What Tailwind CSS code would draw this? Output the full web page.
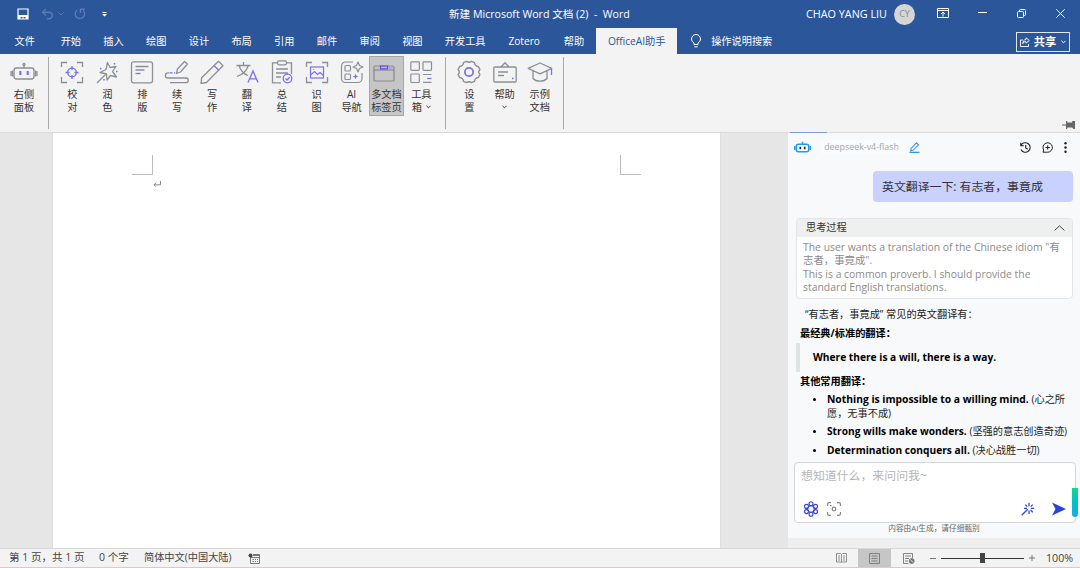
<!DOCTYPE html>
<html lang="zh-CN">
<head>
  <meta charset="UTF-8">
  <meta name="viewport" content="width=device-width, initial-scale=1.0">
  <title>新建 Microsoft Word 文档 (2) - Word</title>
  <script src="https://cdn.jsdelivr.net/npm/@tailwindcss/browser@4"></script>
</head>
<body class="w-[1080px] h-[568px] overflow-hidden flex flex-col bg-[#f3f3f3] text-[#333] whitespace-nowrap font-['Open_Sans','Noto_Sans_CJK_SC',sans-serif]">
  <!-- Title bar -->
  <header class="h-7 shrink-0 bg-[#2b579a] text-white flex items-center relative text-[10.6px]">
    <svg class="ml-[17px] w-3 h-3" viewBox="0 0 12 12" fill="none" stroke="#fff" stroke-width="1.200"><path d="M1 1h10v10H1z"/><path d="M1 7h10v4H8.500V9h-2v2h-1V9h-2v2H1z" fill="#fff" stroke="none"/></svg>
    <svg class="ml-[12px] w-[13px] h-3" viewBox="0 0 13 12" fill="none" stroke="#587bb3" stroke-width="1.400"><path d="M5 1 1.500 4.200 5 7.500M1.500 4.200h6.500a3.300 3.300 0 0 1 0 6.600H6"/></svg>
    <svg class="ml-[4px] w-[6px] h-1" viewBox="0 0 6 4" fill="none" stroke="#587bb3"><path d="M.5.5 3 3 5.500.5"/></svg>
    <svg class="ml-[10px] w-3 h-3" viewBox="0 0 12 12" fill="none" stroke="#587bb3" stroke-width="1.400"><path d="M3 2.200A4.700 4.700 0 1 0 9.200 2.500M6.500 5V1.200h4.500"/></svg>
    <svg class="ml-[16px] w-[5px] h-[5px]" viewBox="0 0 5 5"><path d="M.5 0h4v1h-4zM0 2h5L2.500 4.500z" fill="#fff"/></svg>
    <div class="absolute left-[449px] top-0 h-7 leading-7 whitespace-pre">新建 Microsoft Word 文档 (2)  -  Word</div>
    <div class="ml-auto w-[81px] flex justify-end text-[10.800px]">CHAO YANG LIU</div>
    <div class="ml-[7px] w-[21px] h-[21px] rounded-full bg-[#d5d5d5] text-[#8d8d8d] text-[9px] flex items-center justify-center">CY</div>
    <svg class="ml-[22px] mb-[2px] w-3 h-[10px]" viewBox="0 0 12 10" fill="none" stroke="#fff"><path d="M.5.5h11v9H.5zM.5 2.500h11M6 8.500v-4M4 6l2-2 2 2"/></svg>
    <svg class="ml-[29px] mb-[2px] w-[9px] h-[10px]" viewBox="0 0 9 10" stroke="#fff"><path d="M0 4.500h9"/></svg>
    <svg class="ml-[30px] mb-[2px] w-[9px] h-[9px]" viewBox="0 0 9 9" fill="none" stroke="#fff"><rect x=".5" y="2.500" width="6" height="6" rx="1"/><path d="M2.500 2.200V1.500a1 1 0 0 1 1-1h4a1 1 0 0 1 1 1v4a1 1 0 0 1-1 1h-.7"/></svg>
    <svg class="ml-[30px] mr-[15px] mb-[2px] w-[9px] h-[9px]" viewBox="0 0 9 9" stroke="#fff"><path d="m.4.4 8.200 8.200M8.600.4.4 8.600"/></svg>
  </header>

  <!-- Ribbon tabs -->
  <nav class="h-[26px] shrink-0 bg-[#2b579a] text-white flex items-center text-[10.200px] text-center leading-[26px]">
    <div class="w-[49.500px]">文件</div>
    <div class="w-[42.700px]">开始</div>
    <div class="w-[42.700px]">插入</div>
    <div class="w-[42.700px]">绘图</div>
    <div class="w-[42.700px]">设计</div>
    <div class="w-[42.700px]">布局</div>
    <div class="w-[42.700px]">引用</div>
    <div class="w-[42.700px]">邮件</div>
    <div class="w-[42.700px]">审阅</div>
    <div class="w-[42.700px]">视图</div>
    <div class="w-[63px]">开发工具</div>
    <div class="w-[55px]">Zotero</div>
    <div class="w-[44.500px]">帮助</div>
    <div class="w-[81px] h-[26px] bg-[#f3f3f3] text-[#2b579a]">OfficeAI助手</div>
    <svg class="ml-[14px] w-[10px] h-[14px]" viewBox="0 0 10 14" fill="none" stroke="#fff"><path d="M3 10.500V9C1.500 8 .5 6.700.5 5a4.500 4.500 0 0 1 9 0C9.500 6.700 8.500 8 7 9v1.500zM3.300 12.800h3.400"/></svg>
    <div class="ml-[10px]">操作说明搜索</div>
    <div class="ml-auto mr-[10px] mt-px w-[54px] h-5 border border-[#dfe6f1] flex items-center justify-center font-bold text-[11.300px]">
      <svg class="w-[10px] h-[10px] mr-1" viewBox="0 0 10 10" fill="none" stroke="#fff"><path d="M3 3H.5v6.500h8V7M6 .8 9.300 3.500 6 6.200V4.600C4.300 4.600 3.300 5.200 2.800 6.700 2.800 4.200 4 2.700 6 2.500z" stroke-width=".9"/></svg>
      共享
      <svg class="w-[5px] h-[4px] ml-[5px]" viewBox="0 0 6 4" fill="none" stroke="#fff" stroke-width="1.200"><path d="M.5.5 3 3 5.500.5"/></svg>
    </div>
  </nav>

  <!-- Ribbon -->
  <section class="h-[79px] shrink-0 bg-[#f3f3f3] border-b border-[#dadada] flex items-start relative text-[10.200px] leading-[13px] text-center text-[#333]">
    <div class="ml-[6px] mt-[2px] w-[36px] h-[60px] pt-1 flex flex-col items-center">
      <svg class="w-[28px] h-6 mb-[3.500px]" viewBox="0 0 28 24" fill="none" stroke="#8c9095" stroke-width="1.300"><rect x="4" y="8" width="20" height="11" rx="2.500"/><path d="M14 8V5.500M1 11v5M27 11v5M2.500 10.500v6M25.500 10.500v6"/><circle cx="14" cy="4.500" r="1"/><path d="M10.300 11v4M17.700 11v4" stroke="#7671f5" stroke-width="2.200"/></svg>
      <span>右侧<br>面板</span>
    </div>
    <div class="ml-[6px] mt-[3px] w-px h-[72px] bg-[#a9a9a9]"></div>
    <div class="ml-[6px] mt-[2px] flex">
      <div class="w-[34.900px] h-[60px] pt-1 flex flex-col items-center">
        <svg class="w-6 h-6 mb-[3.500px]" viewBox="0 0 24 24" fill="none" stroke="#8c9095" stroke-width="1.300"><path d="M1.500 7V2.500H7M17 2.500h5.500V7M22.500 17v5.500H17M7 22.500H1.500V17"/><g stroke="#7671f5"><circle cx="12" cy="12.500" r="4.300"/><path d="M12 6v4M12 15v4M5.500 12.500h4M14.500 12.500h4"/></g></svg>
        <span>校<br>对</span>
      </div>
      <div class="w-[34.900px] h-[60px] pt-1 flex flex-col items-center">
        <svg class="w-6 h-6 mb-[3.500px]" viewBox="0 0 24 24" fill="none" stroke="#8c9095" stroke-width="1.300" stroke-linejoin="round"><path d="m12.500 2.500 2.500 5 6-1-3.500 5 4 5.500-6-1.500-3.500 4.500-.5-6-6.500-1.500 6-3zM10.500 14.500 2 23"/><path d="M5 8.500h1.500M19.500 3v1.500M21 11.500h1.500M9 19v1.500" stroke="#7671f5" stroke-width="1.500"/></svg>
        <span>润<br>色</span>
      </div>
      <div class="w-[34.900px] h-[60px] pt-1 flex flex-col items-center">
        <svg class="w-6 h-6 mb-[3.500px]" viewBox="0 0 24 24" fill="none" stroke="#8c9095" stroke-width="1.300"><rect x="1.500" y="1.800" width="21" height="21" rx="2"/><path d="M5.500 6.500h13M5.500 10h9"/><path d="M5.500 13.500h5" stroke="#7671f5"/></svg>
        <span>排<br>版</span>
      </div>
      <div class="w-[34.900px] h-[60px] pt-1 flex flex-col items-center">
        <svg class="w-[26px] h-6 mb-[3.500px]" viewBox="0 0 26 24" fill="none" stroke="#8c9095" stroke-width="1.300" stroke-linejoin="round"><path d="m20.500 1.500 3 2.500-7 8-4 1.500 1-4.500zM5.500 12.800H4a2.600 2.600 0 0 0 0 5.200h18a2.300 2.300 0 0 1 0 4.600H6"/><path d="M6 12.800h2.500M10 12.800h1.200" stroke="#7671f5"/></svg>
        <span>续<br>写</span>
      </div>
      <div class="w-[34.900px] h-[60px] pt-1 flex flex-col items-center">
        <svg class="w-6 h-6 mb-[3.500px]" viewBox="0 0 24 24" fill="none" stroke="#8c9095" stroke-width="1.300" stroke-linejoin="round"><path d="m18.500 1.200 4.500 4.500L6.500 22.500l-5.500 1 .7-5.800z"/><path d="m14.200 5.700 4.500 4.500" stroke="#7671f5"/></svg>
        <span>写<br>作</span>
      </div>
      <div class="w-[34.900px] h-[60px] pt-1 flex flex-col items-center">
        <svg class="w-6 h-6 mb-[3.500px]" viewBox="0 0 24 24" fill="none" stroke="#8c9095" stroke-width="1.300"><path d="M1.500 5.500h14M8.500 2v3.500M4 5.500C5.500 10.500 9 14 13 15.500M13.300 5.500C11.800 11 7.500 14.500 2 16.500"/><path d="m13 22.500 5-11.500 5 11.500M14.800 18.800h6.400" stroke="#7671f5"/></svg>
        <span>翻<br>译</span>
      </div>
      <div class="w-[34.900px] h-[60px] pt-1 flex flex-col items-center">
        <svg class="w-6 h-6 mb-[3.500px]" viewBox="0 0 24 24" fill="none" stroke="#8c9095" stroke-width="1.300"><path d="M7 2.800H2.500v20H11M17 2.800h4.500V14"/><rect x="7.500" y=".8" width="9" height="4" rx="1.500"/><path d="M6 9h12M6 13h12M6 17h5"/><g stroke="#7671f5"><circle cx="17.500" cy="18.500" r="4.300"/><path d="m15.500 18.500 1.500 1.500 2.700-2.700"/></g></svg>
        <span>总<br>结</span>
      </div>
      <div class="w-[34.900px] h-[60px] pt-1 flex flex-col items-center">
        <svg class="w-6 h-6 mb-[3.500px]" viewBox="0 0 24 24" fill="none" stroke="#8c9095" stroke-width="1.300"><path d="M1.500 7V2.500H7M17 2.500h5.500V7M22.500 17v5.500H17M7 22.500H1.500V17"/><g stroke="#7671f5" stroke-width="1.200"><rect x="5.500" y="7" width="13" height="11"/><path d="m5.500 15 4-3.500 3 3 2.500-2 3.500 3"/><path d="M8.300 9.500h1"/></g></svg>
        <span>识<br>图</span>
      </div>
      <div class="w-[34.900px] h-[60px] pt-1 flex flex-col items-center">
        <svg class="w-6 h-6 mb-[3.500px]" viewBox="0 0 24 24" fill="none" stroke="#8c9095" stroke-width="1.200" stroke-linejoin="round"><path d="M13 2H5.500A4 4 0 0 0 1.500 6v12.500a4 4 0 0 0 4 4H18a4 4 0 0 0 4-4V13"/><rect x="5" y="5.500" width="5.500" height="5.500" rx="1"/><rect x="5" y="14" width="5.500" height="5.500" rx="1"/><path d="m18 2 1.500 3.500L23 7l-3.500 1.500L18 12l-1.500-3.500L13 7l3.500-1.500z"/><path d="m15.500 13.500.8 2.200 2.200.8-2.200.8-.8 2.200-.8-2.200-2.200-.8 2.200-.8z" fill="#7671f5" stroke="none"/></svg>
        <span>AI<br>导航</span>
      </div>
      <div class="w-[34.900px] h-[60px] pt-[3px] flex flex-col items-center bg-[#c6c6c6] border border-[#a6a6a6]">
        <svg class="w-6 h-6 mr-1 mb-[3.500px]" viewBox="0 0 24 24" fill="none" stroke="#85898e" stroke-width="1.200"><rect x="2" y="6" width="20" height="15" rx="1"/><path d="M2 10h20"/><path d="M8.500 6h7v2.800h-7z" stroke="#5552f5" stroke-width="1.200"/><path d="M16.500 7.500h5" stroke="#a7a2f0" stroke-width="2"/></svg>
        <span>多文档<br>标签页</span>
      </div>
      <div class="w-[34.900px] h-[60px] pt-1 flex flex-col items-center">
        <svg class="w-6 h-6 mb-[3.500px]" viewBox="0 0 24 24" fill="none" stroke="#8c9095" stroke-width="1.200"><rect x="1.800" y="1.800" width="8.500" height="8.500" rx=".8"/><rect x="14" y="1.800" width="8.500" height="8.500" rx=".8"/><rect x="1.800" y="14" width="8.500" height="8.500" rx=".8"/><path d="M14 14.500h8.500M14 22.300h8.500"/><path d="M18 18.500h4.500" stroke="#7671f5"/></svg>
        <span>工具<br>箱<svg class="inline w-[5px] h-1 ml-1 mb-px" viewBox="0 0 6 4" fill="none" stroke="#444" stroke-width="1.200"><path d="M.5.5 3 3 5.500.5"/></svg></span>
      </div>
    </div>
    <div class="ml-[6px] mt-[3px] w-px h-[72px] bg-[#a9a9a9]"></div>
    <div class="ml-[6px] mt-[2px] flex">
      <div class="w-[35.200px] h-[60px] pt-1 flex flex-col items-center">
        <svg class="w-6 h-6 mb-[3.500px]" viewBox="0 0 26 26" fill="none" stroke="#8c9095" stroke-width="1.500" stroke-linejoin="round"><path d="M10.200 1.500Q13 3.500 15.800 1.500L19 2.800Q19.300 6.500 23 7l1.800 3.200Q22.200 13 24.800 15.800L23 19Q19.300 19.500 19 23.200L15.800 24.500Q13 22.500 10.200 24.500L7 23.200Q6.700 19.500 3 19L1.200 15.800Q3.800 13 1.200 10.200L3 7Q6.700 6.500 7 2.800z"/><circle cx="13" cy="13" r="4.500" stroke="#7671f5" stroke-width="1.900"/></svg>
        <span>设<br>置</span>
      </div>
      <div class="w-[35.200px] h-[60px] pt-1 flex flex-col items-center">
        <svg class="w-6 h-6 mb-[3.500px]" viewBox="0 0 24 24" fill="none" stroke="#8c9095" stroke-width="1.300" stroke-linejoin="round"><rect x=".8" y="7" width="22.400" height="15" rx="1"/><path d="M8 7l4-4.200L16 7M5 12h10M5 15.500h6"/><path d="M19 18.500h1.500" stroke="#7671f5" stroke-width="1.500"/></svg>
        帮助<svg class="w-[5px] h-1 mt-1" viewBox="0 0 6 4" fill="none" stroke="#444" stroke-width="1.200"><path d="M.5.5 3 3 5.500.5"/></svg>
      </div>
      <div class="w-[35.200px] h-[60px] pt-1 flex flex-col items-center">
        <svg class="w-[26px] h-6 mb-[3.500px]" viewBox="0 0 26 24" fill="none" stroke="#8c9095" stroke-width="1.300" stroke-linejoin="round"><path d="M13 3 1.200 8.300 13 13.800l11.800-5.500zM6 11v7.500c3 3.500 11 3.500 14 0V11"/><path d="M24.500 8.800V15" stroke="#7671f5"/></svg>
        <span>示例<br>文档</span>
      </div>
    </div>
    <div class="ml-[6px] mt-[3px] w-px h-[72px] bg-[#a9a9a9]"></div>
    <svg class="absolute right-[5px] bottom-[2px] w-[13px] h-[10px]" viewBox="0 0 13 10" fill="#666"><path d="M0 4.600h4V5.600H0zM4 1h1.200v1.500h5V1H13v8h-1.500L10.200 7.500h-5V9H4z"/></svg>
  </section>

  <!-- Workspace -->
  <main class="h-[415px] shrink-0 flex bg-[#e6e6e6]">
    <div class="ml-[52px] w-[669px] bg-white border-x border-[#dedede] relative">
      <div class="absolute left-[79px] top-[22px] w-[21px] h-5 border-r border-b border-[#bcbcbc]"></div>
      <div class="absolute left-[567px] top-[22px] w-[21px] h-5 border-l border-b border-[#bcbcbc]"></div>
      <svg class="absolute left-[100px] top-[48px] w-2 h-[7px]" viewBox="0 0 8 7" fill="none" stroke="#8a8a8a"><path d="M7.500 0v3.800H1M3 1.800l-2 2 2 2"/></svg>
    </div>

    <!-- Chat panel -->
    <aside class="ml-[67px] w-[292px] bg-[#efefef] relative">
      <div class="absolute left-[2px] -top-px w-[37px] h-px bg-[#7e9ddc]"></div>
      <div class="h-[405px] bg-[#f7f9fb] flex flex-col">
        <div class="h-7 shrink-0 flex items-center">
          <svg class="ml-[6px] w-[17px] h-3" viewBox="0 0 17 12" fill="none" stroke="#1d9cf0" stroke-width="1.500"><rect x="2.300" y="3.200" width="12.400" height="7.500" rx="2"/><path d="M8.500 3V.8M.8 5v4M16.200 5v4"/><path d="M6.300 5.700v2.500M10.700 5.700v2.500" stroke="#222" stroke-width="1.600"/></svg>
          <div class="ml-[10px] w-[81px] flex justify-center text-[8.900px] text-[#a5a8ab] bg-[#fafbfc]">deepseek-v4-flash</div>
          <svg class="ml-[7px] w-[11px] h-[11px]" viewBox="0 0 11 11" fill="none" stroke="#3b92ee" stroke-width="1.100"><path d="m7.500.8 2 2-5.500 5.500-2.300.5.400-2.400zM.5 10.400h10"/></svg>
          <svg class="ml-auto w-[11px] h-[11px]" viewBox="0 0 11 11" fill="none" stroke="#222" stroke-width="1.100"><path d="M1 3.500A4.800 4.800 0 1 1 1 7.500M.8.8v3h3M5.700 3v3l2 1.200"/></svg>
          <svg class="ml-[11px] w-[11px] h-[11px]" viewBox="0 0 11 11" fill="none" stroke="#222"><path d="M1 10.200h4.700a4.700 4.700 0 1 0-4-2.200zM5.700 3.300v4.400M3.500 5.500h4.400"/></svg>
          <svg class="ml-[11px] mr-[13px] w-[3px] h-[11px]" viewBox="0 0 3 11" fill="#222"><circle cx="1.500" cy="1.300" r="1.200"/><circle cx="1.500" cy="5.500" r="1.200"/><circle cx="1.500" cy="9.700" r="1.200"/></svg>
        </div>
        <div class="ml-[85px] mt-[10px] w-[200px] h-[31px] shrink-0 rounded bg-[#c9d1ff] pl-[9px] leading-[31px] text-[11.900px] text-[#333]">英文翻译一下: 有志者，事竟成</div>
        <div class="ml-[8px] mt-[16px] w-[277px] h-[81px] shrink-0 rounded border border-[#e3e5e7] bg-white">
          <div class="h-[18px] rounded-t bg-[#eeefef] pl-[9px] pr-[7px] flex items-center justify-between text-[10.200px]">思考过程
            <svg class="w-[11px] h-[6px]" viewBox="0 0 11 6" fill="none" stroke="#444"><path d="M.6 5.400 5.500.8l4.900 4.600"/></svg>
          </div>
          <p class="pl-[6px] pt-[4px] text-[10.400px] leading-[13.300px] text-[#8b8b8b]">The user wants a translation of the Chinese idiom "有<br>志者，事竟成".<br>This is a common proverb. I should provide the<br>standard English translations.</p>
        </div>
        <div class="ml-3 text-[10.200px] text-[#222]">
          <p class="mt-[7px] pl-[5px] h-4 leading-4">“有志者，事竟成” 常见的英文翻译有：</p>
          <p class="mt-[3px] h-4 leading-4 font-bold text-black">最经典/标准的翻译：</p>
          <p class="-ml-[4px] mt-[2px] h-[29px] border-l-4 border-[#dfe3e3] pl-[13px] leading-[29px] font-bold text-black">Where there is a will, there is a way.</p>
          <p class="mt-px h-4 leading-4 font-bold text-black">其他常用翻译：</p>
          <ul class="mt-[4px] ml-[27px] leading-[13.500px]">
            <li class="relative"><i class="absolute -left-[14px] top-[5px] w-[3px] h-[3px] rounded-full bg-black"></i><b class="text-black text-[10.300px]">Nothing is impossible to a willing mind.</b> (心之所<br>愿，无事不成)</li>
            <li class="relative mt-[5px]"><i class="absolute -left-[14px] top-[5px] w-[3px] h-[3px] rounded-full bg-black"></i><b class="text-black">Strong wills make wonders.</b> (坚强的意志创造奇迹)</li>
            <li class="relative mt-[5px]"><i class="absolute -left-[14px] top-[5px] w-[3px] h-[3px] rounded-full bg-black"></i><b class="text-black">Determination conquers all.</b> (决心战胜一切)</li>
          </ul>
        </div>
        <div class="mt-auto ml-[6px] w-[282px] h-[61px] shrink-0 rounded border border-[#d4d7da] bg-white flex flex-col">
          <div class="pl-[6px] pt-[4px] text-[11.900px] leading-4 text-[#b5b5b5]">想知道什么，来问问我~</div>
          <div class="mt-auto mb-[5px] pl-2 pr-[9px] flex items-center">
            <svg class="w-4 h-4" viewBox="0 0 16 16" fill="none" stroke="#3541dc" stroke-width="1.100"><circle cx="8" cy="8" r="3.300"/><circle cx="8" cy="2.800" r="2"/><circle cx="12.500" cy="5.400" r="2"/><circle cx="12.500" cy="10.600" r="2"/><circle cx="8" cy="13.200" r="2"/><circle cx="3.500" cy="10.600" r="2"/><circle cx="3.500" cy="5.400" r="2"/></svg>
            <svg class="ml-2 w-[14px] h-[14px]" viewBox="0 0 14 14" fill="none" stroke="#888" stroke-width="1.200"><path d="M.6 4V2A1.400 1.400 0 0 1 2 .6h2M10 .6h2A1.400 1.400 0 0 1 13.400 2v2M13.400 10v2a1.400 1.400 0 0 1-1.400 1.400h-2M4 13.400H2A1.400 1.400 0 0 1 .6 12v-2"/><circle cx="7" cy="7" r="1.800"/><path d="M3 3.700h1.500"/></svg>
            <svg class="ml-auto w-[14px] h-[14px]" viewBox="0 0 14 14" fill="none" stroke="#2f46d8" stroke-width="1.300"><path d="m.7 13.300 6-6M8 .8v3.400M8 8.500v3.500M3 6.300h3M9.800 6.300h3.400M4.300 2.600l2 2M11.700 2.600l-2 2M9.600 8l2.200 2.200"/></svg>
            <svg class="ml-[17px] w-[14px] h-[14px]" viewBox="0 0 14 14" fill="#2646d4"><path d="M0 .5 14 7 0 13.500 3.500 7z"/></svg>
          </div>
        </div>
        <div class="h-[15px] shrink-0 flex justify-center text-[7.700px] leading-[11px] text-[#666]">内容由AI生成，请仔细甄别</div>
      </div>
      <div class="absolute right-[2px] top-[355px] w-[6px] h-[29px] rounded-b bg-linear-to-b from-[#16d68c] to-[#1ba8ee]"></div>
    </aside>
  </main>

  <!-- Status bar -->
  <footer class="h-5 shrink-0 bg-[#f3f3f3] border-t border-[#d8d8d8] border-b border-b-[#e3c5cb] flex items-center text-[10.200px] text-[#444]">
    <div class="ml-[9px] w-[90px] text-[10.500px]">第 1 页，共 1 页</div>
    <div class="w-[45px] text-[10.500px]">0 个字</div>
    <div class="w-[104px]">简体中文(中国大陆)</div>
    <svg class="w-3 h-[11px]" viewBox="0 0 12 11" fill="none" stroke="#777"><path d="M2.500 4v6.500h9v-9H5M3 4.500h8M4.500 6.500h1.500M7 6.500h1M9 6.500h1M4.500 8.500h1.500M7 8.500h1M9 8.500h1M5 2.500h6"/><circle cx="2.500" cy="2.500" r="2" fill="#444" stroke="none"/></svg>
    <svg class="ml-auto w-[11px] h-[10px]" viewBox="0 0 11 10" fill="none" stroke="#777" stroke-width=".8"><path d="M5.500 1.500v8M.5.5h4l1 1 1-1h4v8.500h-4l-1 .7-1-.7h-4zM2 3h2M2 5h2M2 7h2M7 3h2M7 5h2M7 7h2"/></svg>
    <div class="ml-[11px] w-[33px] h-[18px] bg-[#c6c6c6] flex items-center justify-center">
      <svg class="w-[11px] h-[11px]" viewBox="0 0 11 11" fill="none" stroke="#808080"><path d="M.5.5h10v10H.5zM2.500 3h6M2.500 5.500h6M2.500 8h6"/></svg>
    </div>
    <svg class="ml-3 w-3 h-[11px]" viewBox="0 0 12 11" fill="none" stroke="#777" stroke-width=".9"><path d="M5.500 10.500h-5V.5h9V5M2 3h6M2 5.500h4M2 8h3"/><circle cx="8.700" cy="8" r="2.500" fill="#777"/><path d="m7.500 6.500 2.500 3" stroke="#eee"/></svg>
    <div class="ml-[15px] w-[6px] h-px bg-[#777]"></div>
    <div class="ml-[5px] w-[83px] h-[10px] relative flex items-center"><i class="w-full h-px bg-[#333]"></i><i class="absolute left-[39px] top-0 w-[5px] h-[10px] bg-[#444]"></i></div>
    <svg class="ml-[5px] w-[6px] h-[6px]" viewBox="0 0 6 6" stroke="#777"><path d="M0 3h6M3 0v6"/></svg>
    <div class="ml-[11px] w-[34px] text-[10.700px]">100%</div>
  </footer>
</body>
</html>
